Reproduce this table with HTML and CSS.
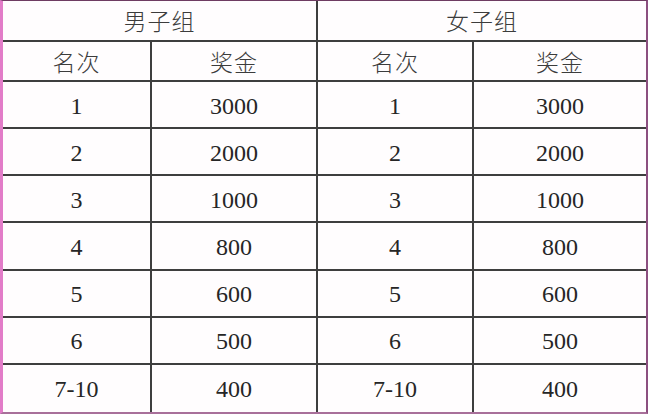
FILE: index.html
```html
<!DOCTYPE html>
<html>
<head>
<meta charset="utf-8">
<title>奖金表</title>
<link rel="stylesheet" href="styles.css">
</head>
<body>
<div class="frame">
  <div class="grid">
    <div class="cell span2 cjk">男子组</div>
    <div class="cell span2 cjk last-col">女子组</div>

    <div class="cell cjk">名次</div>
    <div class="cell cjk">奖金</div>
    <div class="cell cjk">名次</div>
    <div class="cell cjk last-col">奖金</div>

    <div class="cell num">1</div><div class="cell num">3000</div><div class="cell num">1</div><div class="cell num last-col">3000</div>
    <div class="cell num">2</div><div class="cell num">2000</div><div class="cell num">2</div><div class="cell num last-col">2000</div>
    <div class="cell num">3</div><div class="cell num">1000</div><div class="cell num">3</div><div class="cell num last-col">1000</div>
    <div class="cell num">4</div><div class="cell num">800</div><div class="cell num">4</div><div class="cell num last-col">800</div>
    <div class="cell num">5</div><div class="cell num">600</div><div class="cell num">5</div><div class="cell num last-col">600</div>
    <div class="cell num">6</div><div class="cell num">500</div><div class="cell num">6</div><div class="cell num last-col">500</div>
    <div class="cell num last-row">7-10</div><div class="cell num last-row">400</div><div class="cell num last-row">7-10</div><div class="cell num last-row last-col">400</div>
  </div>
</div>
</body>
</html>
```

FILE: styles.css
```css
html, body {
  margin: 0;
  padding: 0;
  background: #ffffff;
}

.frame {
  width: 648px;
  height: 414px;
  box-sizing: border-box;
  border-left: 3px solid #e27cc8;
  border-top: 1px solid #6e3c62;
  border-right: 2px solid #8c4f80;
  border-bottom: 2px solid #a8709a;
  background: #fffdfe;
}

.grid {
  display: grid;
  width: 100%;
  height: 100%;
  grid-template-columns: 149px 166px 156px 1fr;
  grid-template-rows: 41px 40px repeat(7, 1fr);
}

.cell {
  box-sizing: border-box;
  display: flex;
  align-items: center;
  justify-content: center;
  border-right: 2px solid #3e3e3e;
  border-bottom: 2px solid #3e3e3e;
  line-height: 1;
}

.num {
  font-family: "Liberation Serif", "Times New Roman", serif;
  font-size: 24px;
  color: #262626;
  padding-top: 2px;
}

.cjk {
  font-family: "Noto Sans CJK SC", sans-serif;
  font-weight: 300;
  font-size: 23px;
  color: #3c3c3c;
  letter-spacing: 1px;
}

.span2 {
  grid-column: span 2;
}

.last-col {
  border-right: none;
}

.last-row {
  border-bottom: none;
}
```
